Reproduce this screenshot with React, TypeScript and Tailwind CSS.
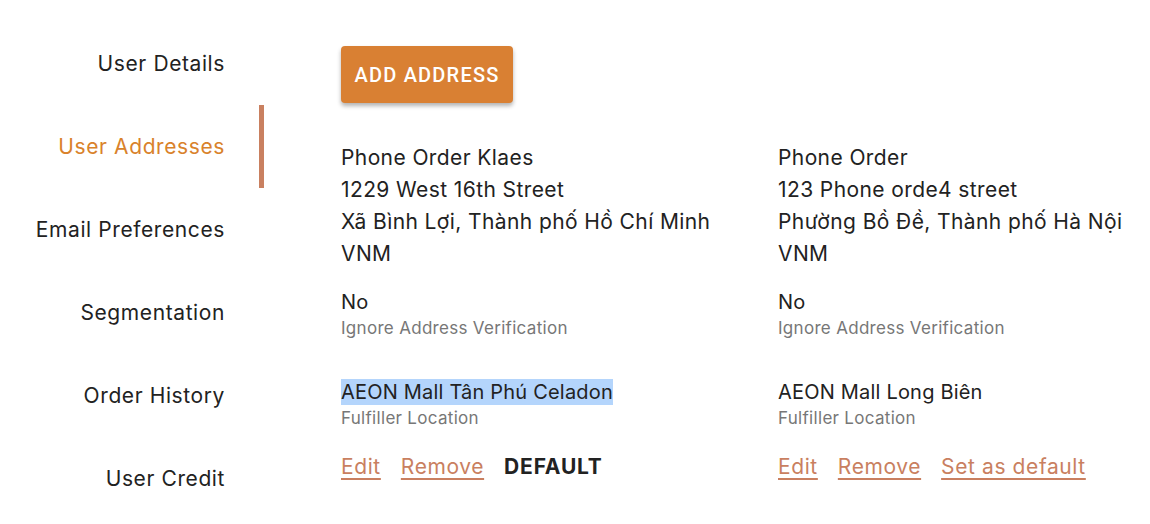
const navItems = [
  'User Details',
  'User Addresses',
  'Email Preferences',
  'Segmentation',
  'Order History',
  'User Credit',
];

type Address = {
  name: string;
  street: string;
  region: string;
  country: string;
  ignoreVerification: string;
  fulfiller: string;
  isDefault: boolean;
  selected?: boolean;
};

const addresses: Address[] = [
  {
    name: 'Phone Order Klaes',
    street: '1229 West 16th Street',
    region: 'Xã Bình Lợi, Thành phố Hồ Chí Minh',
    country: 'VNM',
    ignoreVerification: 'No',
    fulfiller: 'AEON Mall Tân Phú Celadon',
    isDefault: true,
    selected: true,
  },
  {
    name: 'Phone Order',
    street: '123 Phone orde4 street',
    region: 'Phường Bồ Đề, Thành phố Hà Nội',
    country: 'VNM',
    ignoreVerification: 'No',
    fulfiller: 'AEON Mall Long Biên',
    isDefault: false,
  },
];

const linkClass =
  'text-[#c97f60] underline decoration-[1.5px] underline-offset-[4px] cursor-pointer';

function AddressCard({ address }: { address: Address }) {
  return (
    <div className="text-[#222]">
      <div className="text-[21px] leading-[32px] tracking-[0.4px]">
        <div>{address.name}</div>
        <div>{address.street}</div>
        <div>{address.region}</div>
        <div>{address.country}</div>
      </div>
      <div className="mt-[18px] text-[20px] leading-[28px] tracking-[0.2px]">
        {address.ignoreVerification}
      </div>
      <div className="text-[17px] leading-[24px] tracking-[0.3px] text-[#777]">
        Ignore Address Verification
      </div>
      <div className="mt-[38px] text-[20px] leading-[28px] tracking-[0.2px]">
        <span className={address.selected ? 'bg-[#b4d5fc] py-[1px]' : ''}>{address.fulfiller}</span>
      </div>
      <div className="text-[17px] leading-[24px] tracking-[0.3px] text-[#777]">Fulfiller Location</div>
      <div className="mt-[23px] flex items-center gap-5 text-[21px] leading-[28px] tracking-[0.6px]">
        <a className={linkClass}>Edit</a>
        <a className={linkClass}>Remove</a>
        {address.isDefault ? (
          <span className="font-bold tracking-[0.8px] text-[#222]">DEFAULT</span>
        ) : (
          <a className={linkClass}>Set as default</a>
        )}
      </div>
    </div>
  );
}

export default function App() {
  return (
    <div className="flex h-[524px] w-[1150px] overflow-hidden bg-white font-['Inter',sans-serif]">
      <nav className="w-[264px] shrink-0 pt-[22px]">
        {navItems.map((item, i) => {
          const active = i === 1;
          return (
            <div
              key={item}
              className={`flex h-[83px] items-center justify-end text-[21px] tracking-[0.6px] ${
                active ? 'border-r-[5px] border-[#c98060] pr-[34px] text-[#d9822b]' : 'pr-[39px] text-[#222]'
              }`}
            >
              {item}
            </div>
          );
        })}
      </nav>
      <main className="min-w-0 flex-1 pl-[77px] pt-[46px]">
        <button className="h-[57px] w-[172px] rounded-[4px] bg-[#d98033] font-['Roboto',sans-serif] text-[20px] font-medium tracking-[1.2px] text-white shadow-[0_3px_4px_rgba(0,0,0,0.3)]">
          ADD ADDRESS
        </button>
        <div className="mt-[39px] grid grid-cols-[437px_1fr]">
          {addresses.map((a) => (
            <AddressCard key={a.name} address={a} />
          ))}
        </div>
      </main>
    </div>
  );
}
